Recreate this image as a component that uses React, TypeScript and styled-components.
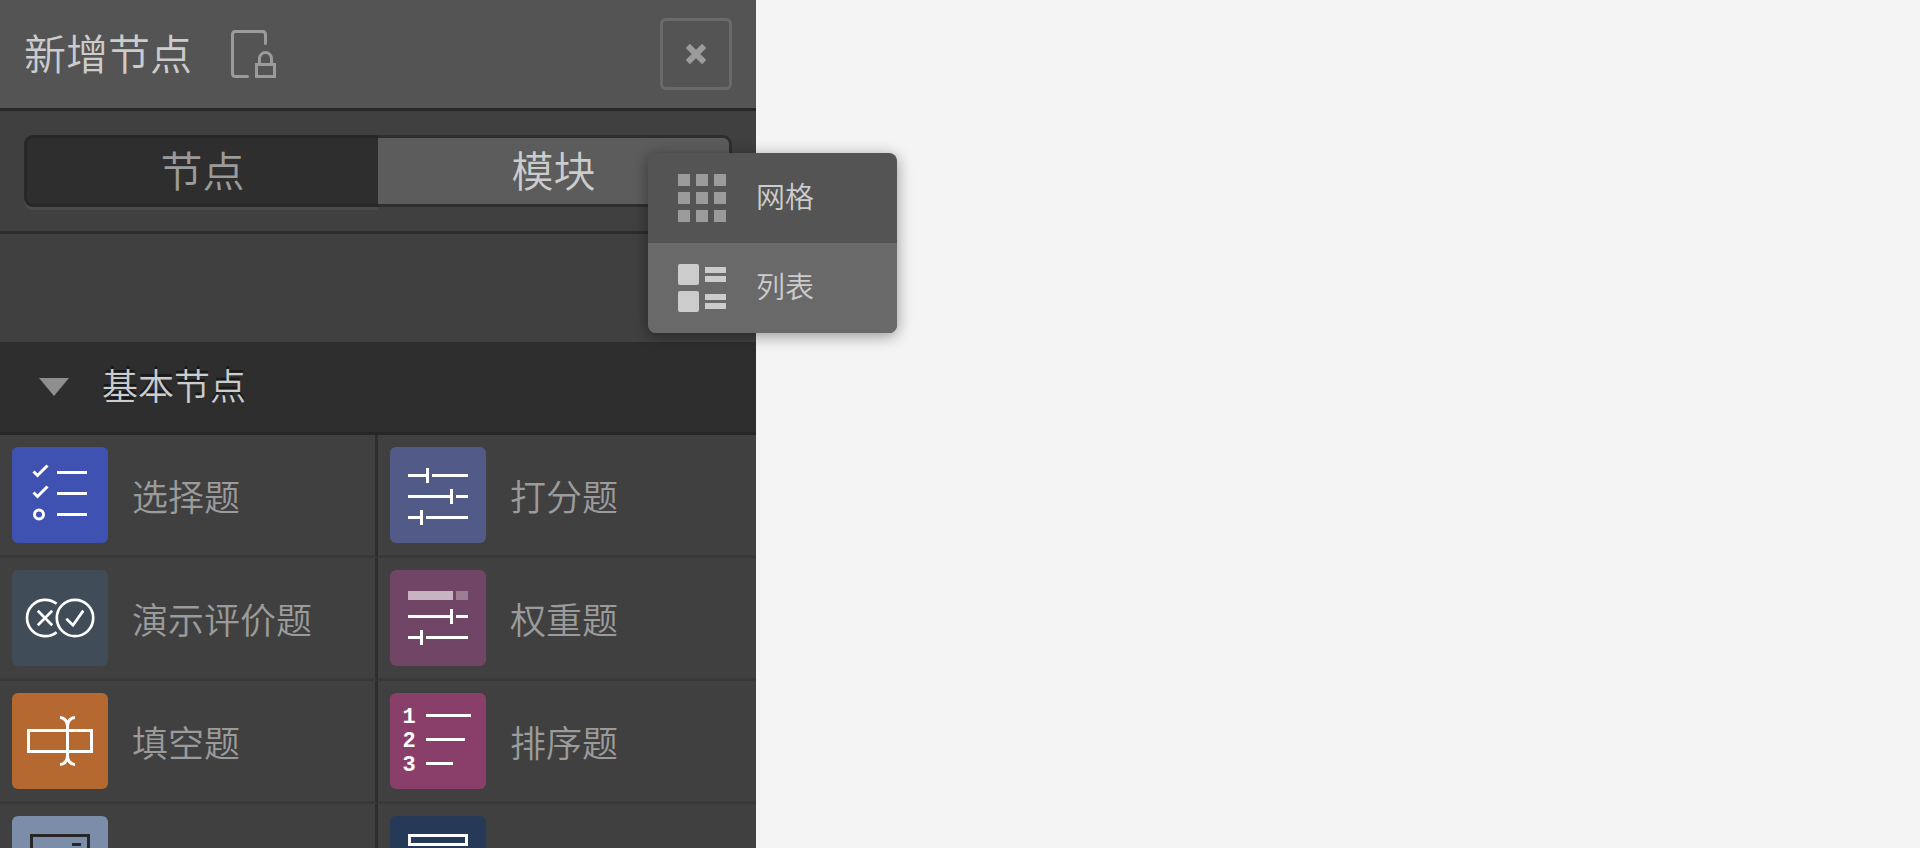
import React from "react";
import styled, { createGlobalStyle } from "styled-components";

const GlobalStyle = createGlobalStyle`
  * { box-sizing: border-box; }
  body {
    margin: 0;
    background: #f4f4f4;
    font-family: "Noto Sans CJK SC", "Noto Sans", sans-serif;
    font-weight: 350;
  }
  button { font: inherit; color: inherit; padding: 0; border: 0; background: none; cursor: pointer; }
`;

const Panel = styled.section`
  position: relative;
  display: flex;
  flex-direction: column;
  width: 756px;
  max-width: 100%;
  height: 100vh;
  background: #404040;
  color: #9b9b9b;
`;

const Header = styled.header`
  display: flex;
  flex: none;
  align-items: center;
  padding: 18px 24px;
  background: #545454;
  border-bottom: 3px solid #272727;
`;

const Title = styled.h1`
  margin: 0;
  padding-bottom: 4px;
  font-size: 42px;
  line-height: 60px;
  font-weight: inherit;
  color: #cccccc;
`;

const IconButton = styled.button`
  display: flex;
  margin-left: 36px;
`;

const CloseButton = styled.button`
  display: flex;
  align-items: center;
  justify-content: center;
  width: 72px;
  height: 72px;
  margin-left: auto;
  border: 3px solid #6a6a6a;
  border-radius: 6px;
`;

const Tabs = styled.nav`
  display: flex;
  flex: none;
  padding: 24px;
  border-bottom: 3px solid #2d2d2d;
`;

const Tab = styled.button<{ $active?: boolean }>`
  flex: 1;
  height: 72px;
  padding-bottom: 4px;
  font-size: 42px;
  line-height: 60px;
  color: ${(p) => (p.$active ? "#cccccc" : "#9b9b9b")};
  background: ${(p) => (p.$active ? "#5c5c5c" : "#2e2e2e")};
  border: 3px solid ${(p) => (p.$active ? "#2e2e2e" : "#272727")};
  box-shadow: ${(p) => (p.$active ? "none" : "0 3px 0 #4a4a4a")};

  &:first-child { border-right: 0; border-radius: 9px 0 0 9px; }
  &:last-child { border-left: 0; border-radius: 0 9px 9px 0; }
`;

const Toolbar = styled.div`
  flex: none;
  height: 108px;
`;

const SectionHeader = styled.button`
  display: flex;
  flex: none;
  align-items: center;
  gap: 33px;
  padding: 0 39px;
  height: 93px;
  background: #2e2e2e;
  border-bottom: 3px solid #272727;
  font-size: 36px;
  line-height: 54px;
  color: #cccccc;
  text-shadow: 0 -3px 0 #191919;
`;

const Label = styled.span`
  padding-bottom: 6px;
`;

const NodeGrid = styled.div`
  display: grid;
  grid-template-columns: 1fr 1fr;
  grid-auto-rows: 123px;
  flex: 1;
  min-height: 0;
  overflow: hidden;
`;

const NodeCell = styled.button`
  display: flex;
  align-items: center;
  gap: 24px;
  padding: 12px;
  text-align: left;
  font-size: 36px;
  line-height: 54px;
  border-bottom: 3px solid #393939;

  &:nth-child(odd) { border-right: 3px solid #2d2d2d; }
`;

const Tile = styled.span<{ $color: string }>`
  display: flex;
  flex: none;
  width: 96px;
  height: 96px;
  border-radius: 6px;
  background: ${(p) => p.$color};
`;

const Menu = styled.div`
  position: absolute;
  z-index: 1;
  top: 153px;
  left: 648px;
  width: 249px;
  border-radius: 8px;
  overflow: hidden;
  background: #545454;
  box-shadow: 0 3px 15px rgba(0, 0, 0, 0.4);
`;

const MenuItem = styled.button<{ $selected?: boolean }>`
  display: flex;
  align-items: center;
  gap: 30px;
  width: 100%;
  height: 90px;
  padding: 0 30px;
  font-size: 29px;
  line-height: 42px;
  color: #cccccc;
  background: ${(p) => (p.$selected ? "#696969" : "transparent")};
`;

const TileSvg = ({ children, stroke = "#fff" }: { children: React.ReactNode; stroke?: string }) => (
  <svg width="96" height="96" viewBox="0 0 96 96" fill="none" stroke={stroke} strokeWidth="3" aria-hidden="true">
    {children}
  </svg>
);

const ChoiceIcon = () => (
  <TileSvg>
    <path d="M21.5 24.5L25.5 28.5L35.5 18.5M21.5 45.5L25.5 49.5L35.5 39.5M45 25.5H75M45 46.5H75M45 67.5H75" />
    <circle cx="27" cy="67.5" r="4.5" />
  </TileSvg>
);

const ScoreIcon = () => (
  <TileSvg>
    <path d="M18 28.5H37.5M37.5 21V36M42 28.5H78M18 49.5H61.5M61.5 42V57M66 49.5H78M18 70.5H31.5M31.5 63V78M36 70.5H78" />
  </TileSvg>
);

const ReviewIcon = () => (
  <TileSvg>
    <circle cx="63" cy="48" r="18.2" strokeWidth="2.7" />
    <path
      strokeWidth="2.7"
      d="M44.6 33.8A18.2 18.2 0 1 0 44.6 62.2M25.8 40.8L40.2 55.2M40.2 40.8L25.8 55.2M54.3 48.8L61 55.2L71.3 40.6"
    />
  </TileSvg>
);

const WeightIcon = () => (
  <TileSvg>
    <path stroke="none" fill="#fff" opacity="0.6" d="M18 21H63V30H18Z" />
    <path stroke="none" fill="#fff" opacity="0.3" d="M66 21H78V30H66Z" />
    <path d="M18 46.5H61.5M61.5 39V54M66 46.5H78M18 67.5H31.5M31.5 60V75M36 67.5H78" />
  </TileSvg>
);

const BlankIcon = () => (
  <TileSvg>
    <rect x="16.5" y="37.5" width="63" height="21" />
    <path d="M48 24.5C52 24.5 55.5 28 55.5 33V63C55.5 68 52 71.5 48 71.5M63 24.5C59 24.5 55.5 28 55.5 33M55.5 63C55.5 68 59 71.5 63 71.5" />
  </TileSvg>
);

const SortIcon = () => (
  <TileSvg>
    <path d="M36 22.5H81M36 46.5H75M36 70.5H63" />
    <g fill="#fff" stroke="none" fontFamily='"Liberation Mono", monospace' fontWeight="700" fontSize="22" textAnchor="middle">
      <text x="19" y="30">1</text>
      <text x="19" y="54">2</text>
      <text x="19" y="78">3</text>
    </g>
  </TileSvg>
);

const WindowIcon = () => (
  <TileSvg stroke="#272727">
    <path d="M19.5 78V19.5H76.5V78M60 28.5H69" />
  </TileSvg>
);

const FieldIcon = () => (
  <TileSvg>
    <rect x="19.5" y="19.5" width="57" height="9" />
  </TileSvg>
);

const LockIcon = () => (
  <svg width="48" height="48" viewBox="0 0 48 48" fill="none" stroke="#9b9b9b" strokeWidth="3" aria-hidden="true">
    <path
      strokeLinecap="round"
      d="M37.5 13.5V4.5Q37.5 1.5 34.5 1.5H7.5Q4.5 1.5 4.5 4.5V43.5Q4.5 46.5 7.5 46.5H19.5"
    />
    <path d="M28.5 34.5H46.5V46.5H28.5ZM31.5 34.5V28.5A6 6 0 0 1 43.5 28.5V34.5" />
  </svg>
);

const CloseIcon = () => (
  <svg width="24" height="24" viewBox="0 0 24 24" stroke="#9b9b9b" strokeWidth="6" aria-hidden="true">
    <path d="M3.8 3.8L20.2 20.2M20.2 3.8L3.8 20.2" />
  </svg>
);

const GridIcon = () => (
  <svg width="48" height="48" viewBox="0 0 48 48" fill="#9b9b9b" aria-hidden="true">
    {[0, 18, 36].map((y) => [0, 18, 36].map((x) => <rect key={`${x}-${y}`} x={x} y={y} width="12" height="12" />))}
  </svg>
);

const ListIcon = () => (
  <svg width="48" height="48" viewBox="0 0 48 48" fill="#cccccc" aria-hidden="true">
    <rect width="21" height="21" rx="2" />
    <rect y="27" width="21" height="21" rx="2" />
    <path d="M27 3H48V9H27ZM27 12H48V18H27ZM27 30H48V36H27ZM27 39H48V45H27Z" />
  </svg>
);

const nodes: { label?: string; color: string; Icon: () => React.ReactElement }[] = [
  { label: "选择题", color: "#3f51b1", Icon: ChoiceIcon },
  { label: "打分题", color: "#525a87", Icon: ScoreIcon },
  { label: "演示评价题", color: "#404c58", Icon: ReviewIcon },
  { label: "权重题", color: "#714566", Icon: WeightIcon },
  { label: "填空题", color: "#b66831", Icon: BlankIcon },
  { label: "排序题", color: "#8a3e6a", Icon: SortIcon },
  { color: "#7b8da9", Icon: WindowIcon },
  { color: "#263957", Icon: FieldIcon },
];

export default function App() {
  return (
    <>
      <GlobalStyle />
      <Panel>
        <Header>
          <Title>新增节点</Title>
          <IconButton type="button">
            <LockIcon />
          </IconButton>
          <CloseButton type="button">
            <CloseIcon />
          </CloseButton>
        </Header>
        <Tabs>
          <Tab type="button">节点</Tab>
          <Tab type="button" $active>
            模块
          </Tab>
        </Tabs>
        <Toolbar />
        <SectionHeader type="button">
          <svg width="30" height="18" viewBox="0 0 30 18" fill="#8e8e8e" aria-hidden="true">
            <path d="M0 0H30L15 18Z" />
          </svg>
          <Label>基本节点</Label>
        </SectionHeader>
        <NodeGrid>
          {nodes.map(({ label, color, Icon }) => (
            <NodeCell type="button" key={color}>
              <Tile $color={color}>
                <Icon />
              </Tile>
              {label}
            </NodeCell>
          ))}
        </NodeGrid>
        <Menu>
          <MenuItem type="button">
            <GridIcon />
            <Label>网格</Label>
          </MenuItem>
          <MenuItem type="button" $selected>
            <ListIcon />
            <Label>列表</Label>
          </MenuItem>
        </Menu>
      </Panel>
    </>
  );
}
